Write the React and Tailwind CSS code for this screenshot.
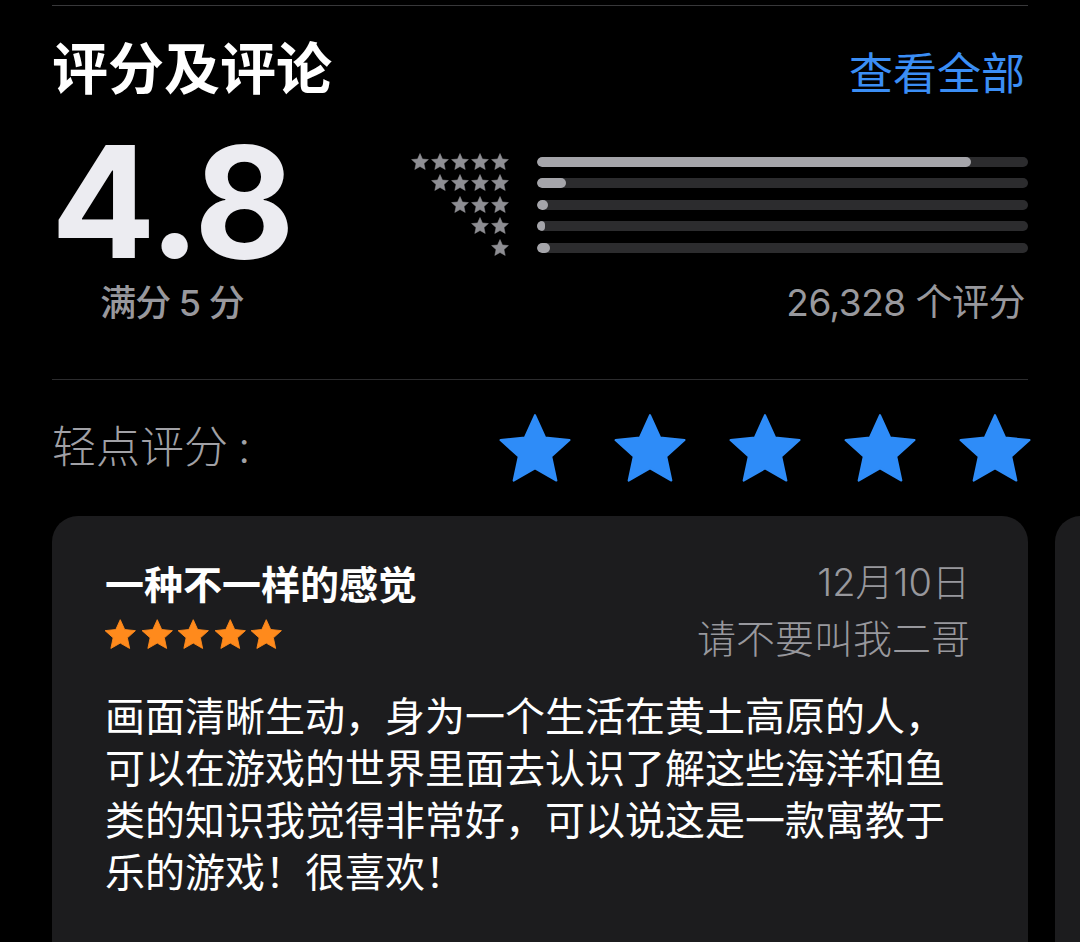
const BARS = [88.4, 5.9, 2.2, 1.6, 2.7];

const LINES = [
  "画面清晰生动，身为一个生活在黄土高原的人，",
  "可以在游戏的世界里面去认识了解这些海洋和鱼",
  "类的知识我觉得非常好，可以说这是一款寓教于",
  "乐的游戏！很喜欢！",
];

function Star({ className }) {
  return (
    <svg viewBox="0 0 24 24" className={className} fill="currentColor">
      <path
        d="M12 1.8l2.95 6.55 7.15.75-5.35 4.8 1.5 7.05L12 17.4l-6.25 3.55 1.5-7.05L1.9 9.1l7.15-.75z"
        stroke="currentColor"
        strokeWidth="0.6"
        strokeLinejoin="round"
      />
    </svg>
  );
}

export default function App() {
  return (
    <div className="w-[1080px] h-[942px] overflow-hidden bg-black font-['Inter','Noto_Sans_CJK_SC',sans-serif]">
      <div className="px-[52px] pt-[5px]">
        <div className="h-px bg-[#38383a]" />

        {/* header */}
        <div className="flex justify-between items-start mt-[31px]">
          <h2 className="text-[56px] leading-[56px] font-bold text-white font-['Noto_Sans_CJK_SC',sans-serif]">
            评分及评论
          </h2>
          <span className="mt-[12px] mr-[3px] text-[44px] leading-[44px] text-[#3b8ef5] font-['Noto_Sans_CJK_SC',sans-serif]">
            查看全部
          </span>
        </div>

        {/* score + histogram */}
        <div className="flex mt-[42.5px]">
          <div className="w-[240px] flex flex-col items-center">
            <div className="text-[155px] leading-[132px] font-bold text-[#ececf1] tracking-[-2px]">4.8</div>
            <div className="mt-[15px] text-[36px] leading-[40px] font-medium text-[#98989d] tracking-[-1px]">
              满分 5 分
            </div>
          </div>
          <div className="flex-1 pl-[118px] flex flex-col">
            <div className="mt-[15.5px]">
              {BARS.map((pct, i) => (
                <div key={i} className="h-[21.5px] flex items-center">
                  <div className="w-[100px] flex justify-end text-[#8e8e93]">
                    {Array.from({ length: 5 - i }).map((_, j) => (
                      <Star key={j} className="w-[20px] h-[20px]" />
                    ))}
                  </div>
                  <div className="ml-[27px] flex-1 h-[10px] rounded-full bg-[#2c2c2e] overflow-hidden">
                    <div className="h-full rounded-full bg-[#a5a5aa]" style={{ width: `${pct}%` }} />
                  </div>
                </div>
              ))}
            </div>
            <div className="mt-[24px] mr-[3px] text-right text-[37px] leading-[40px] text-[#98989d] tracking-[-0.5px]">
              26,328 个评分
            </div>
          </div>
        </div>

        <div className="h-px bg-[#2c2c2e] mt-[56px]" />

        {/* tap to rate */}
        <div className="flex items-center justify-between mt-[29px] mr-[-8px]">
          <span className="text-[44px] leading-[50px] font-light text-[#a1a1a6] -mt-[6px] flex">
            轻点评分<span className="ml-[10px] font-['Inter',sans-serif]">:</span>
          </span>
          <div className="flex gap-[33px] text-[#2e8cf8]">
            {Array.from({ length: 5 }).map((_, j) => (
              <Star key={j} className="w-[82px] h-[82px]" />
            ))}
          </div>
        </div>
      </div>

      {/* review cards */}
      <div className="flex gap-[27px] pl-[52px] mt-[25px]">
        <div className="w-[976px] h-[480px] shrink-0 rounded-[26px] bg-[#1c1c1e] pl-[53px] pr-[58px] pt-[42px]">
          <div className="flex justify-between items-start">
            <span className="text-[39px] leading-[48px] font-semibold text-white font-['Noto_Sans_CJK_SC',sans-serif]">
              一种不一样的感觉
            </span>
            <span className="text-[38px] leading-[48px] font-light text-[#98989d]">12月10日</span>
          </div>
          <div className="flex justify-between items-start mt-[9px]">
            <div className="flex text-[#ff8a1c] mt-[2px] -ml-[3px]">
              {Array.from({ length: 5 }).map((_, j) => (
                <Star key={j} className="w-[36.5px] h-[36px]" />
              ))}
            </div>
            <span className="text-[39px] leading-[48px] font-light text-[#98989d]">请不要叫我二哥</span>
          </div>
          <div className="mt-[28px] text-[40px] leading-[52px] text-white">
            {LINES.map((l, i) => (
              <div key={i} className="whitespace-nowrap">{l}</div>
            ))}
          </div>
        </div>
        <div className="w-[400px] h-[480px] shrink-0 rounded-[26px] bg-[#1c1c1e]" />
      </div>
    </div>
  );
}
